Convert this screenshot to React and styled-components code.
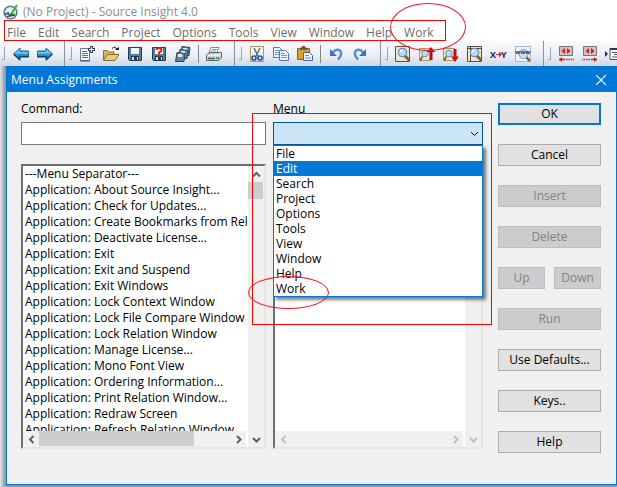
import React from 'react';
import styled, { createGlobalStyle, css } from 'styled-components';

const GlobalStyle = createGlobalStyle`
  * {
    box-sizing: border-box;
  }

  body {
    margin: 0;
    background: #ffffff;
    color: #000000;
    font-family: 'Open Sans', 'Noto Sans', sans-serif;
    font-size: 12px;
    line-height: 16px;
    overflow: hidden;
  }

  button,
  input,
  select {
    font: inherit;
    color: inherit;
  }

  ul {
    list-style: none;
    margin: 0;
    padding: 0;
  }
`;

const TitleBar = styled.header`
  display: flex;
  align-items: center;
  gap: 4px;
  height: 20px;
  padding: 3px 3px 0;
  color: #8c8c8c;
`;

const MenuBar = styled.nav`
  position: relative;
  display: flex;
  gap: 12px;
  width: max-content;
  height: 21px;
  margin-left: 4px;
  padding: 0 12px 0 3px;
`;

const MenuItem = styled.button`
  position: relative;
  padding: 4px 0 0;
  border: 0;
  background: none;
  color: #6d6d6d;
  line-height: 16px;
`;

const Frame = styled.span`
  position: absolute;
  inset: ${({ $inset }) => $inset || '0'};
  border: 1px solid #ff0000;
  pointer-events: none;
  z-index: 3;
`;

const Circle = styled(Frame)`
  border-color: #f01820;
  border-radius: 50%;
`;

const Toolbar = styled.div`
  display: flex;
  height: 25px;
  overflow: hidden;
  background: linear-gradient(#fafbfd, #e9edf5 60%, #d0d7e4);
`;

const Band = styled.div`
  display: flex;
  flex: none;
  align-items: center;
  padding-right: ${({ $first }) => ($first ? '7px' : '8px')};
  border-left: ${({ $first }) => ($first ? '0' : '1px solid #8f9196')};

  &::before {
    content: '';
    width: 2px;
    height: 12px;
    margin: 0 ${({ $first }) => ($first ? '4px 0 2px' : '3px 0 4px')};
    border: solid #a0a2a6;
    border-width: 0 1px 1px 0;
  }
`;

const ToolButton = styled.button`
  display: flex;
  align-items: center;
  justify-content: center;
  width: 24px;
  height: 24px;
  padding: 0;
  border: 0;
  background: none;
`;

const Separator = styled.span`
  width: 1px;
  height: 18px;
  margin: 0 3px;
  background: #85878b;
`;

const Workspace = styled.main`
  padding: 0 0 2px 6px;
  background: linear-gradient(90deg, #dfe4ee 0, #c3c9d4 2px, #a3a6ab 4px, #949494 6px);
`;

const Dialog = styled.section`
  border: 1px solid #0078d7;
  background: #f0f0f0;
`;

const DialogTitle = styled.div`
  display: flex;
  align-items: center;
  justify-content: space-between;
  height: 25px;
  padding: 0 10px 0 4px;
  background: #0078d7;
  color: #ffffff;

  h1 {
    margin: 0;
    font-size: 12px;
    font-weight: 400;
  }
`;

const CloseButton = styled.button`
  display: flex;
  padding: 0;
  border: 0;
  background: none;
`;

const DialogBody = styled.div`
  display: flex;
  padding: 9px 15px 31px 14px;
`;

const Column = styled.div`
  position: relative;
  display: flex;
  flex: ${({ $grow }) => $grow} 1 0;
  flex-direction: column;
  min-width: 0;
  margin-right: ${({ $gap }) => $gap};
`;

const Label = styled.label`
  height: 21px;
`;

const TextBox = styled.input`
  width: 100%;
  height: 23px;
  padding: 0 4px;
  border: 1px solid #7a7a7a;
  background: #ffffff;
  outline: 0;
`;

const Combo = styled.div`
  position: relative;
  height: 23px;

  > svg {
    position: absolute;
    top: 7px;
    right: 4px;
    pointer-events: none;
  }
`;

const Select = styled.select`
  appearance: none;
  width: 100%;
  height: 23px;
  padding: 0 4px;
  border: 1px solid #00559b;
  border-radius: 0;
  background: #cce4f7;
  outline: 0;
`;

const DropList = styled.ul`
  position: absolute;
  top: 23px;
  left: 0;
  right: 0;
  z-index: 2;
  border: 1px solid #0078d7;
  background: #ffffff;
  box-shadow: 3px 3px 3px rgba(0, 0, 0, 0.5);
`;

const DropItem = styled.li`
  position: relative;
  height: 15px;
  padding-left: 2px;
  line-height: 15px;

  ${({ $active }) =>
    $active &&
    css`
      background: #0078d7;
      color: #ffffff;
    `}
`;

const ListBox = styled.div`
  display: grid;
  grid-template-columns: minmax(0, 1fr) 17px;
  height: 285px;
  margin-top: 19px;
  border: 2px solid;
  border-color: #6e6e6e #e6e6e6 #e6e6e6 #6e6e6e;
  background: #ffffff;
`;

const ListPane = styled.div`
  display: flex;
  flex-direction: column;
  min-width: 0;
  min-height: 0;
`;

const Items = styled.ul`
  flex: 1;
  min-height: 0;
  overflow: hidden;

  li {
    height: 16px;
    padding-left: 2px;
    white-space: nowrap;
  }
`;

const ScrollBar = styled.div`
  display: flex;
  flex: none;
  flex-direction: ${({ $vertical }) => ($vertical ? 'column' : 'row')};
  ${({ $vertical }) => ($vertical ? 'width: 17px' : 'height: 16px')};
  border-${({ $vertical }) => ($vertical ? 'left' : 'right')}: 1px solid #ffffff;
  background: #f0f0f0;
  color: ${({ $disabled }) => ($disabled ? '#bfbfbf' : '#606060')};
`;

const ScrollButton = styled.button`
  display: flex;
  flex: none;
  align-items: center;
  justify-content: center;
  width: 16px;
  height: 16px;
  padding: 0;
  border: 0;
  background: none;
`;

const Track = styled.div`
  flex: 1;
`;

const Thumb = styled.div`
  width: ${({ $width }) => $width};
  height: ${({ $height }) => $height};
  background: #cdcdcd;
`;

const Actions = styled.div`
  display: grid;
  flex: none;
  grid-template-columns: 47px 47px;
  grid-auto-rows: 22px;
  gap: 19px 9px;
  align-content: start;
  width: 103px;
  padding-top: 2px;
`;

const PushButton = styled.button`
  grid-column: span ${({ $half }) => ($half ? 1 : 2)};
  padding: 0;
  border: ${({ $primary }) => ($primary ? '2px solid #0078d7' : '1px solid #adadad')};
  background: #e1e1e1;
  line-height: 16px;

  &:disabled {
    border-color: #bfbfbf;
    background: #cccccc;
    color: #838383;
  }
`;

const Icon = ({ children, size = 16 }) => (
  <svg width={size} height={size} viewBox="0 0 16 16" fill="none" aria-hidden="true">
    {children}
  </svg>
);

const chevrons = {
  up: 'M1 6.5 4.5 3 8 6.5',
  down: 'M1 3 4.5 6.5 8 3',
  left: 'M6.5 1 3 4.5 6.5 8',
  right: 'M3 1 6.5 4.5 3 8',
};

const Chevron = ({ dir, width = 2 }) => (
  <svg width="9" height="9" viewBox="0 0 9 9" fill="none" aria-hidden="true">
    <path d={chevrons[dir]} stroke="currentColor" strokeWidth={width} />
  </svg>
);

const Logo = () => (
  <Icon>
    <circle cx="7.5" cy="8.5" r="6.3" fill="#eef4f8" stroke="#56788c" strokeWidth="1.6" />
    <path d="M2 10.5 6 8.5M4 12.5l8-1.5" stroke="#31536b" strokeWidth="1.4" />
    <path d="M4.5 9 7 11.5 12 10" stroke="#31536b" strokeWidth="1.2" />
    <path d="M8 10.5 14 1" stroke="#2fc02f" strokeWidth="2.2" />
    <path d="M7.5 11.500 8.500 9.500" stroke="#1f5d2e" strokeWidth="1.5" />
  </Icon>
);

const Arrow = ({ flip }) => (
  <Icon>
    <g transform={flip ? 'matrix(-1 0 0 1 16 0)' : undefined}>
      <path d="M.5 8 7 2v3h8.500v6H7v3z" fill="#2a9fd6" stroke="#1b6fa3" />
      <path d="M2 7.500 6.500 3.500V6H15v1.500z" fill="#6fd0f0" />
      <path d="M1 8.500 6.500 13.500v-3H16" stroke="#0b3f6c" strokeWidth="1.400" />
    </g>
  </Icon>
);

const NewFile = () => (
  <Icon>
    <path d="M1.5 2.5h9v12h-9z" fill="#f4f7fc" stroke="#6c7993" />
    <path d="M3 5.5h5M3 7.5h6M3 9.5h6M3 11.5h6" stroke="#5e7297" />
    <path d="M1 15h10" stroke="#394c70" />
    <path d="M12.500 0v7M9 3.500h7" stroke="#30456e" strokeWidth="3" />
    <path d="M12.500 1v5M10 3.500h5" stroke="#ffffff" />
  </Icon>
);

const OpenFile = () => (
  <Icon>
    <path d="M.5 14V4.500h4l1 1.500H11v3" fill="#d7b763" stroke="#927026" />
    <path d="M.5 14.500 4 8.500h12L12 14.500z" fill="#e6c979" stroke="#856c31" />
    <path d="M9 2.500q3-3 5 1" stroke="#151515" />
    <path d="M12 4h4V1z" fill="#151515" />
  </Icon>
);

const Floppy = ({ question }) => (
  <Icon>
    <path d="M1.500 1.500h13v13h-12l-1-1z" fill="#597d98" stroke="#203e56" />
    <path d="M4 2h8v6H4z" fill="#eff4f7" />
    <path d="M4 10h8v4H4z" fill="#263846" />
    <path d="M5 11h2v3H5zM10 11h1v3h-1z" fill="#dbe4ed" />
    {question && (
      <path d="M5.500 4q0-2 2.500-2t2.500 2Q10.500 5.500 8 6.500v1.500M8 9v2" stroke="#e81b20" strokeWidth="2" />
    )}
  </Icon>
);

const SaveAll = () => (
  <Icon>
    {[[5, 0], [3, 3], [0, 6]].map(([x, y]) => (
      <g key={x} transform={`translate(${x} ${y})`}>
        <path d="m2 .5 8 1-1 8H.5z" fill="#6485a4" stroke="#29435d" />
        <path d="M3 2h4v3H3z" fill="#e2eaf2" />
      </g>
    ))}
  </Icon>
);

const Printer = () => (
  <Icon>
    <path d="M5 1.500h8l-2 5H3z" fill="#ffffff" stroke="#7d8791" />
    <path d="M6 3.500h5M5 5h5" stroke="#8d98a3" />
    <path d="M.5 9 4 6.500h11.500V12L12 14.500H.5z" fill="#cfd4d9" stroke="#59636e" />
    <path d="M1 9.500h11L15 7" stroke="#ffffff" />
    <path d="M2 12.500h7" stroke="#4b555e" strokeWidth="1.500" />
    <path d="M10 11h3v2h-3z" fill="#16c944" />
  </Icon>
);

const Cut = () => (
  <Icon>
    <path d="M1.500.5h13v15h-13z" fill="#f6f4e6" stroke="#a59c6c" />
    <path d="M5 2l4 8M11 2l-4 8" stroke="#54708a" strokeWidth="1.500" />
    <circle cx="5" cy="12" r="2" stroke="#2257ac" strokeWidth="1.700" />
    <circle cx="11" cy="12" r="2" stroke="#2257ac" strokeWidth="1.700" />
  </Icon>
);

const Copy = () => (
  <Icon>
    <path d="M.5 1.500h6l3 3v7h-9z" fill="#edf4ff" stroke="#5279b5" />
    <path d="M2 4.500h4M2 6.500h4M2 8.500h4" stroke="#769ad0" />
    <path d="M6.500 4.500h6l3 3v7h-9z" fill="#edf4ff" stroke="#5279b5" />
    <path d="M8 7.500h4M8 9.500h6M8 11.500h6" stroke="#769ad0" />
  </Icon>
);

const Paste = () => (
  <Icon>
    <path d="M.5 2.500h12v11H.5z" fill="#d4a12d" stroke="#82601c" />
    <path d="M3 3V1.500h2V0h3v1.500h2V4H3z" fill="#625c4e" />
    <path d="M6.500 6.500h6l3 3v5h-9z" fill="#eef4fc" stroke="#496794" />
    <path d="M8 9.500h4M8 12h6" stroke="#7794bd" />
  </Icon>
);

const Undo = ({ flip }) => (
  <Icon>
    <g transform={flip ? 'matrix(-1 0 0 1 16 0)' : undefined}>
      <path d="M4 7.500Q8 2 12 4.500 15 8 10 13.500" stroke="#5f8dd2" strokeWidth="2.500" />
      <path d="M2 3v7h7z" fill="#3f6fbb" />
    </g>
  </Icon>
);

const Find = ({ arrow, tabs }) => (
  <Icon>
    {arrow ? (
      <path d="M.5 2.500h11v12H.5z" fill="#efe8cb" stroke="#a3966a" />
    ) : (
      <path d="M.5.5h14v15H.5z" fill="#efe8cb" stroke="#5c5130" />
    )}
    {tabs && <path d="M1 2.500h13M3.500 1v14" stroke="#51472c" />}
    {arrow ? (
      <>
        <path d="m3.500 10.500-2.500 4" stroke="#8c6326" strokeWidth="2" />
        <circle cx="6" cy="7.500" r="3.300" fill="#b8dcfa" stroke="#6c8fba" />
      </>
    ) : (
      <>
        <path d="m9.500 9.500 5 5" stroke="#8c6326" strokeWidth="3" />
        <circle cx="7.500" cy="6.500" r="4.200" fill="#b8dcfa" stroke="#6c8fba" strokeWidth="1.200" />
        <path d="M5.500 6q0-2 2-2" stroke="#ffffff" strokeWidth="1.500" />
      </>
    )}
    {arrow === 'up' && <path d="M8 6 12 1l4 5h-2.500v8h-3V6z" fill="#b40d12" />}
    {arrow === 'down' && <path d="M8 10.500 12 16l4-5.500h-2.500V3h-3v7.500z" fill="#c40d12" />}
  </Icon>
);

const Replace = () => (
  <svg width="18" height="16" viewBox="0 0 18 16" aria-hidden="true">
    <text x="0" y="12" fontSize="9" fontWeight="700" fill="#20246f">X</text>
    <text x="11" y="12" fontSize="9" fontWeight="700" fill="#20246f">Y</text>
    <path d="M6 8h3V5.500L12 8.500 9 11.500V9H6z" fill="#ef2020" />
  </svg>
);

const WebSearch = () => (
  <Icon>
    <path d="M.5.5h15v15H.5z" fill="#edf3fa" stroke="#a8b9d0" />
    <path d="m11 11 4 4" stroke="#8c6326" strokeWidth="2.500" />
    <circle cx="8.500" cy="8" r="4.500" fill="#c8e0f4" stroke="#799cc0" />
    <text x="0" y="8" fontSize="6" fontWeight="700" fill="#2d3551">www</text>
  </Icon>
);

const Jump = ({ flip }) => (
  <Icon>
    <path d="M1.500.5h13v9h-13z" fill="#c5c5c5" stroke="#77777a" />
    <path d="M7 2v6L3.500 5zM9 2v6l3.500-3z" fill="#ed1717" />
    <g transform={flip ? 'matrix(-1 0 0 1 16 0)' : undefined}>
      <path d="M1 13.500h6" stroke="#e51717" strokeWidth="1.500" />
      <path d="M8 13.500h8" stroke="#e51717" strokeWidth="1.500" strokeDasharray="1.500 1" />
      <path d="M1 13.500 4 11v5z" fill="#e51717" />
    </g>
  </Icon>
);

const Outline = () => (
  <svg width="18" height="16" viewBox="0 0 18 16" fill="none" aria-hidden="true">
    <path d="M0 5v6l3-3z" fill="#19277b" />
    <path d="M5 2.500h13v11H5z" fill="#ffffff" stroke="#4d5159" />
    <path d="M7 6.500h11M9 8.500h9M7 11h11" stroke="#4d5159" />
    <path d="M5 3h13" stroke="#24365c" strokeWidth="2" />
  </svg>
);

const bands = [
  [['Back', <Arrow />], ['Forward', <Arrow flip />]],
  [
    ['New', <NewFile />],
    ['Open', <OpenFile />],
    ['Save', <Floppy />],
    ['Save As', <Floppy question />],
    ['Save All', <SaveAll />],
    null,
    ['Print', <Printer />],
  ],
  [
    ['Cut', <Cut />],
    ['Copy', <Copy />],
    ['Paste', <Paste />],
    null,
    ['Undo', <Undo />],
    ['Redo', <Undo flip />],
  ],
  [
    ['Find', <Find />],
    ['Find Previous', <Find arrow="up" />],
    ['Find Next', <Find arrow="down" />],
    ['Find in Files', <Find tabs />],
    ['Replace', <Replace />],
    ['Search Web', <WebSearch />],
  ],
  [
    ['Jump Back', <Jump />],
    ['Jump Forward', <Jump flip />],
    ['Outline', <Outline />],
  ],
];

const menus = [
  'File',
  'Edit',
  'Search',
  'Project',
  'Options',
  'Tools',
  'View',
  'Window',
  'Help',
  'Work',
];

const commands = [
  '---Menu Separator---',
  'Application: About Source Insight...',
  'Application: Check for Updates...',
  'Application: Create Bookmarks from Relation',
  'Application: Deactivate License...',
  'Application: Exit',
  'Application: Exit and Suspend',
  'Application: Exit Windows',
  'Application: Lock Context Window',
  'Application: Lock File Compare Window',
  'Application: Lock Relation Window',
  'Application: Manage License...',
  'Application: Mono Font View',
  'Application: Ordering Information...',
  'Application: Print Relation Window...',
  'Application: Redraw Screen',
  'Application: Refresh Relation Window',
];

const buttons = [
  { label: 'OK', primary: true },
  { label: 'Cancel' },
  { label: 'Insert', disabled: true },
  { label: 'Delete', disabled: true },
  { label: 'Up', disabled: true, half: true },
  { label: 'Down', disabled: true, half: true },
  { label: 'Run', disabled: true },
  { label: 'Use Defaults...' },
  { label: 'Keys..' },
  { label: 'Help' },
];

const ScrollList = ({ label, items, disabled }) => (
  <ListBox>
    <ListPane>
      <Items role="listbox" aria-label={label}>
        {items.map((item) => (
          <li key={item} role="option" aria-selected="false">
            {item}
          </li>
        ))}
      </Items>
      <ScrollBar $disabled={disabled}>
        <ScrollButton aria-label="Scroll left" disabled={disabled}>
          <Chevron dir="left" />
        </ScrollButton>
        <Track>{!disabled && <Thumb $width="81%" $height="15px" />}</Track>
        <ScrollButton aria-label="Scroll right" disabled={disabled}>
          <Chevron dir="right" />
        </ScrollButton>
      </ScrollBar>
    </ListPane>
    <ScrollBar $vertical $disabled={disabled}>
      <ScrollButton aria-label="Scroll up" disabled={disabled}>
        <Chevron dir="up" />
      </ScrollButton>
      <Track>{!disabled && <Thumb $width="15px" $height="17px" />}</Track>
      <ScrollButton aria-label="Scroll down" disabled={disabled}>
        <Chevron dir="down" />
      </ScrollButton>
    </ScrollBar>
  </ListBox>
);

const App = () => (
  <>
    <GlobalStyle />
    <TitleBar>
      <Logo />
      <span>(No Project) - Source Insight 4.0</span>
    </TitleBar>

    <MenuBar>
      {menus.map((name) => (
        <MenuItem key={name}>
          {name}
          {name === 'Work' && <Circle $inset="-17px -32px -10px -14px" />}
        </MenuItem>
      ))}
      <Frame />
    </MenuBar>

    <Toolbar>
      {bands.map((tools, i) => (
        <Band key={i} $first={i === 0}>
          {tools.map((tool, j) =>
            tool ? (
              <ToolButton key={tool[0]} aria-label={tool[0]}>
                {tool[1]}
              </ToolButton>
            ) : (
              <Separator key={j} />
            )
          )}
        </Band>
      ))}
    </Toolbar>

    <Workspace>
      <Dialog role="dialog" aria-labelledby="dialog-title">
        <DialogTitle>
          <h1 id="dialog-title">Menu Assignments</h1>
          <CloseButton aria-label="Close">
            <svg width="10" height="10" viewBox="0 0 10 10" aria-hidden="true">
              <path d="m0 0 10 10M10 0 0 10" stroke="#ffffff" strokeWidth="1.2" />
            </svg>
          </CloseButton>
        </DialogTitle>

        <DialogBody>
          <Column $grow={245} $gap="7px">
            <Label htmlFor="command">Command:</Label>
            <TextBox id="command" type="text" />
            <ScrollList label="Commands" items={commands} />
          </Column>

          <Column $grow={210} $gap="15px">
            <Label htmlFor="menu">Menu</Label>
            <Combo>
              <Select id="menu" defaultValue="">
                <option value="" />
                {menus.map((name) => (
                  <option key={name}>{name}</option>
                ))}
              </Select>
              <Chevron dir="down" width={1} />
              <DropList role="listbox" aria-label="Menu choices">
                {menus.map((name) => (
                  <DropItem
                    key={name}
                    role="option"
                    aria-selected={name === 'Edit'}
                    $active={name === 'Edit'}
                  >
                    {name}
                  </DropItem>
                ))}
              </DropList>
            </Combo>
            <ScrollList label="Menu contents" items={[]} disabled />
            <Frame $inset="12px -9px 128px -21px" />
            <Circle $inset="175px 154px 144px -25px" />
          </Column>

          <Actions>
            {buttons.map(({ label, primary, half, disabled }) => (
              <PushButton key={label} $primary={primary} $half={half} disabled={disabled}>
                {label}
              </PushButton>
            ))}
          </Actions>
        </DialogBody>
      </Dialog>
    </Workspace>
  </>
);

export default App;
